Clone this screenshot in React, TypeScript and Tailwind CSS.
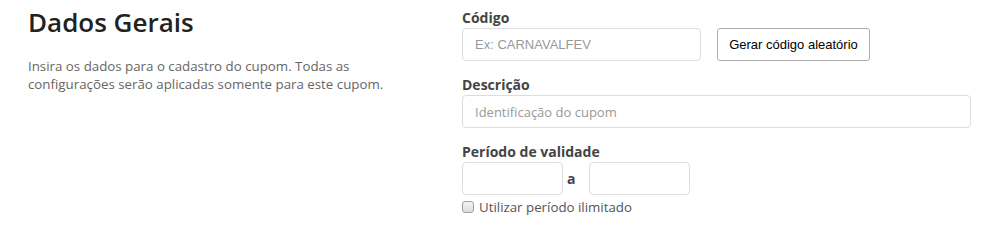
import React from "react";

export default function App() {
  return (
    <div className="w-[988px] h-[241px] bg-white flex font-['Open_Sans',sans-serif]">
      <div className="w-[462px] pl-[28px] pt-[4px] shrink-0">
        <h1 className="text-[26px] leading-[36px] font-semibold text-[#222]">Dados Gerais</h1>
        <p className="mt-[17px] text-[13.3px] leading-[18px] text-[#666] w-[380px]">
          Insira os dados para o cadastro do cupom. Todas as configurações serão aplicadas somente para este cupom.
        </p>
      </div>
      <div className="flex-1 pt-[8px] pr-[17px]">
        <label className="block text-[14px] leading-[20px] font-bold text-[#444]">Código</label>
        <div className="flex gap-[16px]">
          <input
            placeholder="Ex: CARNAVALFEV"
            className="w-[239px] h-[33px] border border-[#ddd] rounded-[4px] px-[12px] text-[13px] font-['Liberation_Sans',Arial,sans-serif] placeholder:text-[#999] outline-none"
          />
          <button className="h-[33px] w-[153px] border border-[#adadad] rounded-[3px] bg-white text-[13px] text-black font-['Liberation_Sans',Arial,sans-serif]">
            Gerar código aleatório
          </button>
        </div>
        <label className="block mt-[14px] text-[14px] leading-[20px] font-bold text-[#444]">Descrição</label>
        <input
          placeholder="Identificação do cupom"
          className="block w-[509px] h-[33px] border border-[#ddd] rounded-[4px] px-[12px] text-[13px] placeholder:text-[#999] outline-none"
        />
        <label className="block mt-[14px] text-[14px] leading-[20px] font-bold text-[#444]">Período de validade</label>
        <div className="flex items-center">
          <input className="w-[101px] h-[33px] border border-[#ddd] rounded-[4px] px-[12px] text-[13px] outline-none" />
          <span className="w-[26px] pl-[4px] text-left text-[14px] font-bold text-[#444]">a</span>
          <input className="w-[101px] h-[33px] border border-[#ddd] rounded-[4px] px-[12px] text-[13px] outline-none" />
        </div>
        <label className="mt-[3px] flex items-center gap-[5px] text-[13.3px] leading-[18px] text-[#555]">
          <span className="w-[12px] h-[12px] rounded-[3px] border border-[#a0a0a0] bg-gradient-to-b from-[#f4f4f4] to-[#dcdcdc]" />
          Utilizar período ilimitado
        </label>
      </div>
    </div>
  );
}
